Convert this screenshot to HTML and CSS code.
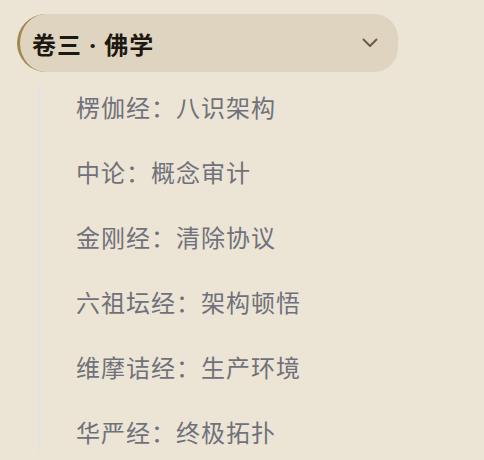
FILE: index.html
```html
<!DOCTYPE html>
<html lang="zh-CN">
<head>
    <meta charset="UTF-8">
    <meta name="viewport" content="width=device-width, initial-scale=1.0">
    <title>卷三 · 佛学</title>
    <link rel="stylesheet" href="styles.css">
</head>
<body>
    <div class="volume">
        <button class="volume-header">
            <span class="volume-title">卷三 · 佛学</span>
            <svg class="chevron" width="16" height="10" viewBox="0 0 16 10">
                <path d="M1.5 1.5 L8 8 L14.5 1.5" fill="none" stroke="currentColor" stroke-width="1.8" stroke-linecap="round" stroke-linejoin="round"/>
            </svg>
        </button>

        <ul class="chapter-list">
            <li class="chapter">楞伽经：八识架构</li>
            <li class="chapter">中论：概念审计</li>
            <li class="chapter">金刚经：清除协议</li>
            <li class="chapter">六祖坛经：架构顿悟</li>
            <li class="chapter">维摩诘经：生产环境</li>
            <li class="chapter">华严经：终极拓扑</li>
        </ul>
    </div>
</body>
</html>
```

FILE: styles.css
```css
body {
    margin: 0;
    padding: 14px 0 0 17px;
    font-family: "Noto Sans", "Noto Sans CJK SC", sans-serif;
    background-color: #ece5d5;
    min-height: 100vh;
    box-sizing: border-box;
}

.volume {
    width: 381px;
}

.volume-header {
    display: flex;
    align-items: center;
    justify-content: space-between;
    width: 100%;
    height: 58px;
    padding: 0 20px 0 12px;
    background-color: #ded4c0;
    border: none;
    border-left: 3px solid #a3874f;
    border-radius: 29px 24px 24px 29px;
    font-family: inherit;
    cursor: pointer;
    box-sizing: border-box;
}

.volume-title {
    font-size: 24px;
    font-weight: bold;
    letter-spacing: 1px;
    color: #1d1912;
}

.chevron {
    color: #6a5a3a;
}

.chapter-list {
    list-style: none;
    margin: 16px 0 0 20px;
    padding: 0 0 0 36px;
    border-left: 3px solid #e3e4e2;
    display: flex;
    flex-direction: column;
    gap: 25px;
}

.chapter {
    font-size: 24px;
    line-height: 40px;
    letter-spacing: 1px;
    color: #70717b;
}
```
